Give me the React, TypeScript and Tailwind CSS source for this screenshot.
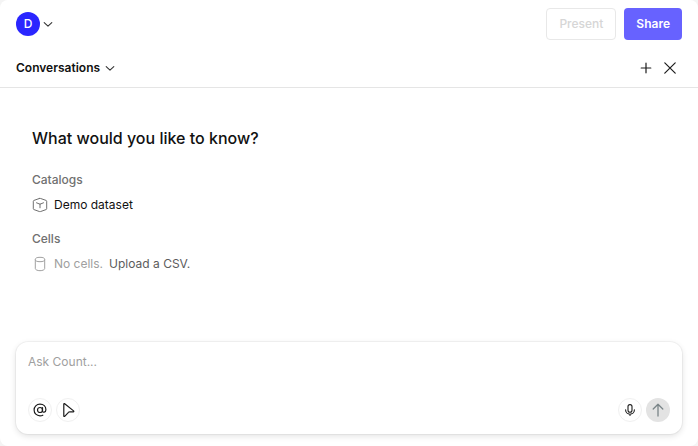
import React from "react";

const Chevron = () => (
    <svg width="10" height="10" viewBox="0 0 10 10" fill="none" stroke="#333333" strokeWidth="1.1" strokeLinecap="round" strokeLinejoin="round" aria-hidden="true">
        <path d="M1.200 3.700 5 7.200l3.800-3.500" />
    </svg>
)

export default function App() {
    return (
        <div className="bg-[#f4f4f4]">
            <div className="flex flex-col min-h-screen rounded-lg bg-white font-['Inter',sans-serif] text-xs leading-5 text-[#111111]">
                <header className="flex items-center justify-between h-12 px-4">
                    <button type="button" aria-label="Account" className="flex items-center gap-[3px]">
                        <span className="grid place-items-center w-6 h-6 rounded-full bg-[#2a26ff] font-medium text-white">D</span>
                        <Chevron />
                    </button>
                    <div className="flex gap-2">
                        <button type="button" disabled className="h-8 px-3 rounded border border-[#e8e8e8] font-medium text-[#d6d6d6]">Present</button>
                        <button type="button" className="h-8 px-3 rounded bg-[#6762ff] font-semibold text-white">Share</button>
                    </div>
                </header>

                <div className="flex items-center justify-between h-10 px-4 border-b border-[#e5e5e5]">
                    <button type="button" className="flex items-center gap-[5px] font-semibold">
                        Conversations
                        <Chevron />
                    </button>
                    <div className="flex">
                        <button type="button" aria-label="New conversation" className="grid place-items-center w-6 h-6">
                            <svg width="12" height="12" viewBox="0 0 12 12" fill="none" stroke="#1c1c1c" strokeWidth="1.2" strokeLinecap="round">
                                <path d="M6 1.200v9.600M1.200 6h9.600" />
                            </svg>
                        </button>
                        <button type="button" aria-label="Close" className="grid place-items-center w-6 h-6">
                            <svg width="12" height="12" viewBox="0 0 12 12" fill="none" stroke="#1c1c1c" strokeWidth="1.2" strokeLinecap="round">
                                <path d="m.8.8 10.4 10.4M11.2.8.8 11.2" />
                            </svg>
                        </button>
                    </div>
                </div>

                <main className="flex-1 px-8 pt-10">
                    <h1 className="text-base leading-5 font-medium">What would you like to know?</h1>

                    <h2 className="mt-[22px] font-medium text-[#707070]">Catalogs</h2>
                    <button type="button" className="flex items-center gap-1.5 mt-[5px]">
                        <svg width="16" height="16" viewBox="0 0 16 16" fill="none" stroke="#707070" strokeWidth="1" strokeLinecap="round" strokeLinejoin="round" aria-hidden="true">
                            <path d="M7.300 1.500 2 3.400a1 1 0 0 0-.7.900v7.400a1 1 0 0 0 .7.900l5.300 1.900a2 2 0 0 0 1.400 0l5.300-1.900a1 1 0 0 0 .7-.9V4.300a1 1 0 0 0-.7-.9L8.700 1.500a2 2 0 0 0-1.400 0Z" />
                            <path d="m4.500 5.800 3.500 1.400 3.500-1.400M8 7.200v3.600" />
                        </svg>
                        Demo dataset
                    </button>

                    <h2 className="mt-3.5 font-medium text-[#707070]">Cells</h2>
                    <div className="flex items-center mt-[5px]">
                        <svg width="16" height="16" viewBox="0 0 16 16" fill="none" stroke="#a0a0a0" strokeWidth="1" aria-hidden="true">
                            <ellipse cx="8" cy="3.500" rx="4.700" ry="2.200" />
                            <path d="M3.300 3.500v9c0 1.200 2.100 2.200 4.700 2.200s4.700-1 4.700-2.200v-9" />
                        </svg>
                        <span className="ml-1.5 text-[#a0a0a0]">No cells.</span>
                        <button type="button" className="ml-1.5 text-[#5c5c5c]">Upload a CSV.</button>
                    </div>
                </main>

                <form onSubmit={(e) => e.preventDefault()} className="mx-4 mb-3 px-3 pt-2.5 pb-3 rounded-xl bg-white shadow-[0_0_0_1px_rgba(0,0,0,0.04),0_2px_6px_rgba(0,0,0,0.12)]">
                    <textarea aria-label="Ask Count" rows={1} placeholder="Ask Count..." className="block w-full h-[46px] resize-none outline-none placeholder:text-[#a0a0a0]" />
                    <div className="flex items-center gap-1">
                        <button type="button" aria-label="Mention" className="grid place-items-center w-6 h-6 rounded-full border border-[#f0f0f0]">
                            <svg width="14" height="14" viewBox="0 0 14 14" fill="none" stroke="#1c1c1c" strokeWidth="1.200" strokeLinecap="round">
                                <circle cx="7" cy="7" r="2.500" />
                                <path d="M9.500 4.500v3.200c0 2.300 3.400 2 3.400-.9C12.900 3.500 10.500 1.200 7 1.200 3.500 1.200 1.100 3.700 1.100 7c0 3.400 2.500 5.800 5.900 5.800 1.100 0 2-.2 2.800-.6" />
                            </svg>
                        </button>
                        <button type="button" aria-label="Select cells" className="grid place-items-center w-6 h-6 rounded-full border border-[#f0f0f0]">
                            <svg width="14" height="14" viewBox="0 0 14 14" fill="none" stroke="#1c1c1c" strokeWidth="1.200" strokeLinejoin="round">
                                <path d="M2.800 1.100c0-.5.500-.7.900-.4l8.900 7.200c.4.400.2.900-.3.900l-4 .1a1 1 0 0 0-.8.4l-3.800 4c-.4.300-.9.100-.9-.4Z" />
                            </svg>
                        </button>
                        <button type="button" aria-label="Dictate" className="grid place-items-center w-6 h-6 ml-auto rounded-full border border-[#f0f0f0]">
                            <svg width="12" height="12" viewBox="0 0 12 12" fill="none" stroke="#1c1c1c" strokeWidth="1.100" strokeLinecap="round">
                                <rect x="4" y=".6" width="4" height="7.600" rx="2" />
                                <path d="M1.600 5.800a4.400 4.400 0 0 0 8.800 0M6 10.300v1.200" />
                            </svg>
                        </button>
                        <button type="submit" aria-label="Send" className="grid place-items-center w-6 h-6 rounded-full bg-[#e3e3e3]">
                            <svg width="14" height="14" viewBox="0 0 14 14" fill="none" stroke="#7a8588" strokeWidth="1.300" strokeLinecap="round" strokeLinejoin="round">
                                <path d="M7 13V1.200M2.200 6 7 1.200 11.800 6" />
                            </svg>
                        </button>
                    </div>
                </form>
            </div>
        </div>
    )
}
